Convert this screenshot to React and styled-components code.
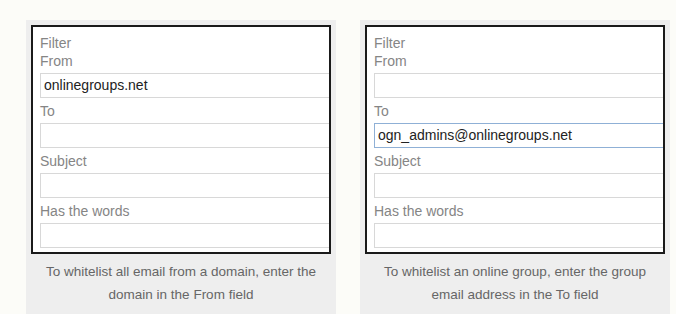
import styled, { createGlobalStyle } from "styled-components";

const GlobalStyle = createGlobalStyle`
  html, body {
    margin: 0;
    padding: 0;
    overflow: hidden;
    background: #fcfcf8;
  }
`;

const examples = [
  {
    fields: [
      { label: "From", value: "onlinegroups.net" },
      { label: "To", value: "" },
      { label: "Subject", value: "" },
      { label: "Has the words", value: "" },
    ],
    caption: ["To whitelist all email from a domain, enter the", "domain in the From field"],
  },
  {
    fields: [
      { label: "From", value: "" },
      { label: "To", value: "ogn_admins@onlinegroups.net", focused: true },
      { label: "Subject", value: "" },
      { label: "Has the words", value: "" },
    ],
    caption: ["To whitelist an online group, enter the group", "email address in the To field"],
  },
];

const App = () => {
  return (
    <>
      <GlobalStyle />
      <Page>
        {examples.map((ex, i) => (
          <Card key={i}>
            <FilterFrame>
              <FrameTitle>Filter</FrameTitle>
              {ex.fields.map((f) => (
                <Field key={f.label}>
                  <Label>{f.label}</Label>
                  <Input $focused={f.focused}>{f.value}</Input>
                </Field>
              ))}
            </FilterFrame>
            <Caption>
              {ex.caption[0]}
              <br />
              {ex.caption[1]}
            </Caption>
          </Card>
        ))}
      </Page>
    </>
  );
};

// page
const Page = styled.div`
  display: flex;
  gap: 24px;
  padding: 20px 0 0 26px;
  font-family: "Liberation Sans", Arial, sans-serif;
`;

// card
const Card = styled.div`
  width: 310px;
  box-sizing: border-box;
  background: #eeeeee;
  padding: 5px 5px 12px;
  display: flex;
  flex-direction: column;
`;

const FilterFrame = styled.div`
  background: #ffffff;
  border: 2px solid #1a1a1a;
  padding: 8px 0 4px 7px;
  overflow: hidden;
  display: flex;
  flex-direction: column;
  gap: 4px;
`;

// text
const FrameTitle = styled.div`
  color: #858585;
  font-size: 14px;
  line-height: 17px;
  margin-bottom: -4px;
`;

const Field = styled.div`
  display: flex;
  flex-direction: column;
  gap: 4px;
`;

const Label = styled.div`
  color: #858585;
  font-size: 14px;
  line-height: 17px;
  padding-top: 1px;
  margin-bottom: -1px;
`;

const Input = styled.div`
  width: 320px;
  height: 25px;
  box-sizing: border-box;
  border: 1px solid ${(props) => (props.$focused ? "#8fb0d6" : "#d8d8d8")};
  padding: 0 3px;
  color: #222;
  font-size: 14px;
  line-height: 23px;
  white-space: nowrap;
`;

const Caption = styled.div`
  color: #666;
  font-size: 13.5px;
  line-height: 23px;
  text-align: center;
  padding-top: 6px;
`;

export default App;
